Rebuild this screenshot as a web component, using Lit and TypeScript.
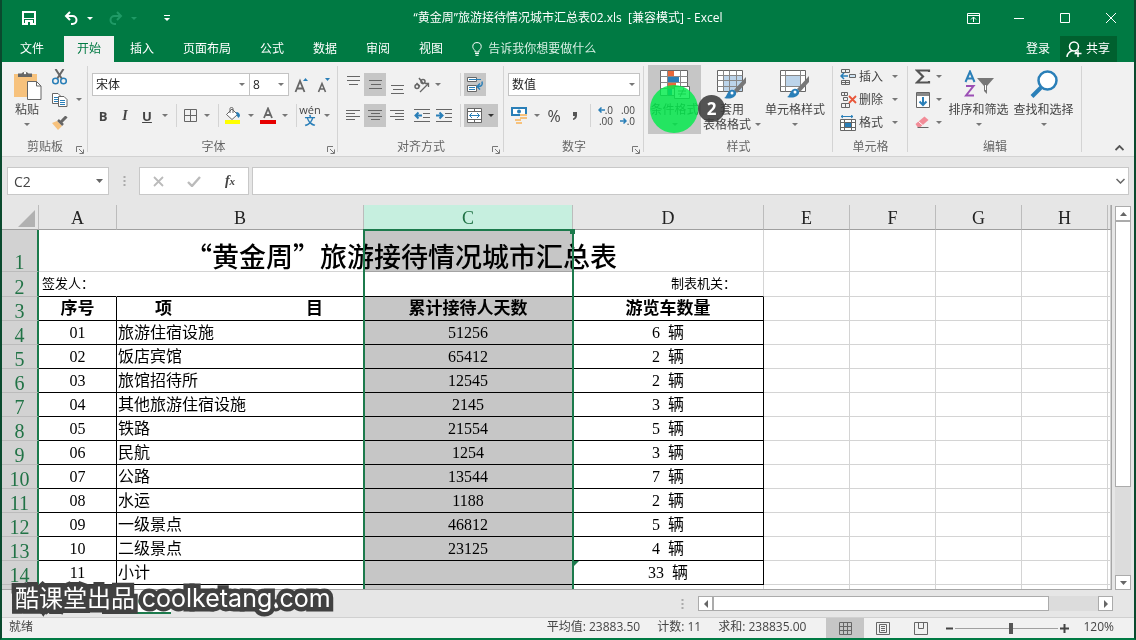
import { LitElement, html, svg, css, nothing } from "lit";
import { customElement, property } from "lit/decorators.js";
import { classMap } from "lit/directives/class-map.js";

const caret = html`<svg class="caret" width="6" height="3" viewBox="0 0 6 3"><path d="M0 0h6L3 3z" fill="currentColor" /></svg>`;

const icon = (w: number, h: number, body: unknown) =>
  html`<svg width=${w} height=${h} viewBox="0 0 ${w} ${h}" fill="none" stroke="#666" aria-hidden="true">${body}</svg>`;

const hLines = (rows: [number, number, number][]) =>
  rows.map(([x, y, w]) => svg`<path d="M${x} ${y + 0.5}h${w}" />`);

const icons = {
  save: icon(14, 14, svg`<path d="M1 1h12v12H1z" stroke="#fff" stroke-width="2"/><path d="M2 7.5h10" stroke="#fff"/><path d="M3 9h8v5H3z" fill="#fff" stroke="none"/><path d="M6 11h2v3H6z" fill="#007a43" stroke="none"/>`),
  undo: icon(15, 14, svg`<path d="M2 5h6.5a4 4 0 0 1 0 8H7M6 1L2 5l4 4" stroke="#fff" stroke-width="2"/>`),
  redo: icon(15, 14, svg`<path d="M13 5H6.500a4 4 0 0 0 0 8H8M9 1l4 4-4 4" stroke="#1f9a66" stroke-width="2"/>`),
  customize: icon(6, 7, svg`<path d="M0 .5h6" stroke="#fff"/><path d="M0 3h6L3 6z" fill="#fff" stroke="none"/>`),
  ribbonOpts: icon(13, 11, svg`<path d="M.5 .5h12v10H.5zM.5 2.500h12M6.500 9V4M4 6.500L6.500 4 9 6.500" stroke="#fff"/>`),
  min: icon(10, 10, svg`<path d="M0 5.500h10" stroke="#fff"/>`),
  max: icon(10, 10, svg`<path d="M.5 .5h9v9h-9z" stroke="#fff"/>`),
  close: icon(10, 10, svg`<path d="M0 0l10 10M10 0L0 10" stroke="#fff"/>`),
  bulb: icon(10, 14, svg`<path d="M3 10V8.500C1.500 7 .800 6 .800 4.600a4.200 4 0 0 1 8.400 0C9.200 6 8.500 7 7 8.500V10zM3 11.500h4M3.500 13.300h3" stroke="#fff"/>`),
  person: icon(16, 16, svg`<circle cx="8" cy="5.500" r="4.500" stroke="#fff" stroke-width="1.500"/><path d="M1 16c0-3 2-5 5-6.500M9.500 10.500L10.500 12M8.500 12.500h7M12 9v7" stroke="#fff" stroke-width="1.500"/>`),
  paste: icon(29, 30, svg`<path d="M1 4h23v23H1z" fill="#f7c27d" stroke="none"/><path d="M5 7V3.500h3.500a4 3.500 0 0 1 7 0H19V7z" fill="#666" stroke="none"/><circle cx="12" cy="3" r="1.200" fill="#fff" stroke="none"/><path d="M14.500 11.500h9l4.500 4.500v13.500H14.500z" fill="#fff"/><path d="M23.500 11.500V16H28"/>`),
  cut: icon(15, 16, svg`<path d="M3.500 0L10 10M11.500 0L5 10" stroke-width="2"/><circle cx="3.500" cy="12" r="2.800" stroke="#2a7fb8" stroke-width="1.500"/><circle cx="11.500" cy="12" r="2.800" stroke="#2a7fb8" stroke-width="1.500"/>`),
  copy: icon(16, 14, svg`<path d="M.5 .5h5.500l2.500 2.500v7.500h-8z" fill="#fff"/><path d="M2 4.500h5M2 6.500h5M2 8.500h5" stroke="#2a7fb8"/><path d="M6.500 3.500h5.500l3 3v7h-8.500z" fill="#fff"/><path d="M8 7.500h5M8 9.500h5M8 11.500h5" stroke="#2a7fb8"/>`),
  brush: icon(16, 14, svg`<path d="M0 7l5-2 5 5-4 4z" fill="#f7c27d" stroke="none"/><path d="M6 4l5 5" stroke-width="2.500"/><path d="M9 6l5.500-5.500" stroke-width="3"/>`),
  growFont: icon(16, 18, svg`<path d="M1.500 16L6 5l4.500 11M3 12.500h6" stroke-width="1.800"/><path d="M9 5h5l-2.500-3z" fill="#2a7fb8" stroke="none"/>`),
  shrinkFont: icon(16, 18, svg`<path d="M2.500 16L6 7.500 9.500 16M4 13h4" stroke-width="1.600"/><path d="M9 2h5l-2.500 3z" fill="#2a7fb8" stroke="none"/>`),
  borders: icon(13, 13, svg`<path d="M.5 .5h12v12H.5zM6.500 .5v12M.5 6.500h12"/>`),
  fill: icon(18, 17, svg`<path d="M2.500 7.500L8 2l5.500 5.500L8 12.500z" fill="#fff"/><path d="M6 6V1.500a1.500 1 0 0 1 3 0V6"/><path d="M12 5c3 0 4 2 4 4l-1.500 2L13 9z" fill="#2a7fb8" stroke="none"/><path d="M1 13h15v4H1z" fill="#ff0" stroke="none"/>`),
  fontColor: icon(16, 17, svg`<path d="M4 11L8 1.500 12 11M5.300 8h5.400" stroke-width="1.800"/><path d="M0 13h16v4H0z" fill="#e60000" stroke="none"/>`),
  orient: icon(17, 16, svg`<g stroke-width="1.500"><circle cx="4" cy="9.500" r="2"/><path d="M3.500 6L7 9.500M6 1l4.500 6"/><circle cx="10" cy="4.500" r="2"/></g><path d="M7 15L15.500 6.500M12 6.500h3.500V10" stroke-width="1.300"/>`),
  top: icon(15, 18, hLines([[1, 0, 13], [1, 4, 13], [3, 8, 9]])),
  middle: icon(15, 18, hLines([[1, 4, 13], [3, 8, 10], [1, 12, 13]])),
  bottom: icon(15, 18, hLines([[1, 9, 13], [3, 13, 10], [1, 17, 13]])),
  left: icon(15, 13, hLines([[0, 1, 14], [0, 4, 9], [0, 7, 14], [0, 10, 9]])),
  center: icon(15, 13, hLines([[0, 1, 14], [3, 4, 9], [0, 7, 14], [3, 10, 9]])),
  right: icon(15, 13, hLines([[0, 1, 14], [5, 4, 9], [0, 7, 14], [5, 10, 9]])),
  outdent: icon(16, 14, svg`${hLines([[0, 0, 16], [9, 4, 7], [9, 8, 7], [0, 12, 16]])}<path d="M8 6.500H2M4.500 3.500l-3 3 3 3" stroke="#2a7fb8" stroke-width="2"/>`),
  indent: icon(16, 14, svg`${hLines([[0, 0, 16], [9, 4, 7], [9, 8, 7], [0, 12, 16]])}<path d="M0 6.500h6M3.500 3.500l3 3-3 3" stroke="#2a7fb8" stroke-width="2"/>`),
  wrap: icon(17, 17, svg`<path d="M.5 1.500h9v4h-9zM.5 9.500h9v6h-9z" fill="#fff"/><path d="M2 3.500h12M2 11.500h6M2 13.500h6" stroke="#2a7fb8"/><path d="M15 5.500c1 4-1 5-4 5M13 7.500l-3 3 3 3" stroke="#2a7fb8" stroke-width="1.500"/>`),
  merge: icon(15, 15, svg`<path d="M.5 .5h14v14H.5z" fill="#fff"/><path d="M.5 3.500h14M.5 11.500h14M7.500 .5v3M7.500 11.500v3"/><path d="M2.500 7.500h10M5 5L2.500 7.500 5 10M10 5l2.500 2.500L10 10" stroke="#2a7fb8"/>`),
  currency: icon(17, 17, svg`<path d="M1 1h14v7H1z" fill="#fff" stroke="#2a7fb8" stroke-width="2"/><circle cx="8" cy="4.500" r="2" fill="#2a7fb8" stroke="none"/><path d="M9 7h7v2H9zM9 10h7v2H9zM4 12h6v2H4zM5 15h6v2H5z" fill="#f7c27d" stroke="none"/>`),
  comma: icon(6, 8, svg`<path d="M1 0h4v3.500C5 6 3.500 7.500 1 8V6.500C2.500 6 2.800 5 2.800 4H1z" fill="#555" stroke="none"/>`),
  larrow: icon(7, 6, svg`<path d="M7 3H1M3.500 .5L1 3l2.500 2.500" stroke="#2a7fb8" stroke-width="1.500"/>`),
  rarrow: icon(7, 6, svg`<path d="M0 3h6M3.500 .5L6 3 3.500 5.500" stroke="#2a7fb8" stroke-width="1.500"/>`),
  cond: icon(30, 30, svg`<path d="M.5 .5h27v25H.5z" fill="#fff"/><path d="M8 1h6v5H8z" fill="#e8683a" stroke="none"/><path d="M8 7h11v5H8z" fill="#2a7fb8" stroke="none"/><path d="M8 13h8v5H8z" fill="#e8683a" stroke="none"/><path d="M8 19h4v6H8z" fill="#2a7fb8" stroke="none"/><path d="M7.500 .5v25M20.500 .5v25M.5 6.500h27M.5 12.500h27M.5 18.500h27" stroke="#888"/><path d="M14.500 16.500h15v12h-15z" fill="#fff"/><path d="M18 21h8M18 24h8M24 18l-4 9"/>`),
  tableFmt: icon(30, 30, svg`<path d="M.5 .5h25v21H.5z" fill="#fff"/><path d="M7 6h18v15H7z" fill="#bcd4ea" stroke="none"/><path d="M6.500 .5v21M12.500 .5v21M19.500 .5v21M.5 5.500h25M.5 10.500h25M.5 16.500h25" stroke="#888"/><path d="M29 7v6l-9 10-3-3z" fill="#777" stroke="none"/><path d="M7 28c3-1 3-7 7-8s7 3 4 6-7 3-11 2z" fill="#2a7fb8" stroke="none"/><circle cx="15" cy="23" r="1.500" fill="#fff" stroke="none"/>`),
  cellFmt: icon(30, 30, svg`<path d="M.5 .5h25v21H.5z" fill="#fff"/><path d="M6 6h14v10H6z" fill="#bcd4ea" stroke="none"/><path d="M5.500 .5v21M20.500 .5v21M.5 5.500h25M.5 16.500h25" stroke="#888"/><path d="M29 6v6l-9 10-3-3z" fill="#777" stroke="none"/><path d="M7 27c3-1 3-7 7-8s7 3 4 6-7 3-11 2z" fill="#2a7fb8" stroke="none"/><circle cx="15" cy="22" r="1.500" fill="#fff" stroke="none"/>`),
  insert: icon(17, 16, svg`<path d="M1.500 .5h8v3h-8zM5.500 .5v3M1.500 11.500h8v4h-8zM5.500 11.500v4M1.500 13.500h8"/><path d="M9.500 5.500h6v3h-6z" fill="#cfe3f3"/><path d="M8 7H1.500M4 4L1 7l3 3" stroke="#2a7fb8" stroke-width="1.500"/>`),
  remove: icon(17, 16, svg`<path d="M1.500 .5h6v3h-6zM4.500 .5v3M1.500 11.500h8v4h-8zM5.500 11.500v4M3.500 5.500h4v3h-4z"/><path d="M9 4l7 7M16 4l-7 7" stroke="#e8573a" stroke-width="1.800"/>`),
  format: icon(17, 16, svg`<path d="M1 1.500h12M3 0L1 1.500 3 3M11 0l2 1.500L11 3" stroke="#2a7fb8"/><path d="M.5 4.500h15v11H.5z" fill="#fff"/><path d="M4.500 4.500v11M11.500 4.500v11M.5 7.500h15M.5 12.500h15"/><path d="M5 8h6v4H5z" fill="#2a7fb8" stroke="none"/>`),
  sum: icon(16, 15, svg`<path d="M14 3V1.500H2L8 7.500l-6 6h12V12" stroke="#555" stroke-width="2.200"/>`),
  fillDown: icon(14, 16, svg`<path d="M.5 .5h13v15H.5z" fill="#fff"/><path d="M1 1h12v3H1z" fill="#888" stroke="none"/><path d="M7 5v7.500M3.500 9.500L7 13l3.500-3.500" stroke="#2a7fb8" stroke-width="2"/>`),
  eraser: icon(15, 13, svg`<path d="M0 8l9-7.500L13 4 5 11H2z" fill="#f28c98" stroke="none"/><path d="M3 5.500l4.500 4" stroke="#fff"/><path d="M2 11.500h11"/>`),
  sort: icon(30, 28, svg`<path d="M1.500 12L6 1.500 10.500 12M3 8.500h6" stroke="#2a7fb8" stroke-width="2"/><path d="M2 16h7.500L2 25.500h8" stroke="#9b4fb5" stroke-width="2"/><path d="M13 8h17l-7 8v8l-3-3v-5z" fill="#777" stroke="none"/><path d="M21.500 15v5" stroke="#fff"/>`),
  find: icon(28, 28, svg`<circle cx="17.500" cy="10.500" r="9" fill="#fff" stroke="#2a7fb8" stroke-width="2.500"/><path d="M11 17.500L2 26.500" stroke="#2a7fb8" stroke-width="4"/>`),
  launcher: icon(8, 8, svg`<path d="M.5 6V.5H6M3 3l4 4M7.500 3.500v4h-4" stroke="#777"/>`),
  chevUp: icon(9, 6, svg`<path d="M.5 5l4-4 4 4" stroke="#555" stroke-width="1.800"/>`),
  chevDown: icon(9, 6, svg`<path d="M.5 1l4 4 4-4" stroke="#666" stroke-width="1.500"/>`),
  cancel: icon(11, 11, svg`<path d="M1 1l9 9M10 1l-9 9" stroke="#bbb" stroke-width="1.800"/>`),
  accept: icon(14, 11, svg`<path d="M1 6l4 4 8-9" stroke="#bbb" stroke-width="2.400"/>`),
  dots: icon(3, 12, svg`<path d="M.500 2h2M.500 6h2M.500 10h2" stroke="#aaa" stroke-width="2"/>`),
  corner: icon(17, 17, svg`<path d="M17 0v17H0z" fill="#b1b1b1" stroke="none"/>`),
  up: icon(7, 4, svg`<path d="M0 4h7L3.500 0z" fill="#666" stroke="none"/>`),
  down: icon(7, 4, svg`<path d="M0 0h7L3.500 4z" fill="#666" stroke="none"/>`),
  prev: icon(4, 8, svg`<path d="M4 0v8L0 4z" fill="#666" stroke="none"/>`),
  next: icon(4, 8, svg`<path d="M0 0v8l4-4z" fill="#666" stroke="none"/>`),
  viewGrid: icon(13, 13, svg`<path d="M.5 .5h12v12H.5zM4.500 .5v12M8.500 .5v12M.5 4.500h12M.5 8.500h12"/>`),
  viewPage: icon(14, 13, svg`<path d="M.5 .5h13v12H.5zM3.500 2.500h7v8h-7zM5 4.500h4M5 6.500h4M5 8.500h4"/>`),
  viewBreak: icon(14, 13, svg`<path d="M.5 .5h13v12H.5zM4.500 .5v6h5v-6"/>`),
  minus: icon(7, 7, svg`<path d="M0 3.500h7" stroke="#444" stroke-width="2"/>`),
  plus: icon(9, 9, svg`<path d="M0 4.500h9M4.500 0v9" stroke="#444" stroke-width="2"/>`),
};

const controls = css`
  :host, * { box-sizing: border-box; }
  button, input, select { font: inherit; color: inherit; border: 0; padding: 0; margin: 0; background: none; border-radius: 0; }
  button { display: flex; align-items: center; justify-content: center; white-space: nowrap; }
  svg { display: block; flex: none; }
  .caret { color: #777; }
`;

@customElement("title-bar")
class TitleBar extends LitElement {
  static styles = [controls, css`
    :host { display: block; background: #007a43; color: #fff; }
    .title { display: grid; grid-template-columns: 1fr auto 1fr; align-items: center; height: 36px; }
    .quick { display: flex; align-items: center; padding-left: 20px; }
    .quick .caret { color: #fff; }
    .quick .off .caret { color: #1f9a66; }
    .save { margin-right: 28px; }
    .pair { gap: 8px; margin-right: 15px; }
    .more { margin-left: 12px; }
    .name { font-weight: 400; font-size: 12px; margin: 0; white-space: pre; }
    .window { display: flex; justify-content: flex-end; }
    .window button { width: 46px; height: 32px; }
    .tabs { display: flex; align-items: stretch; height: 26px; gap: 3px; }
    .tabs button { padding: 0 13px; }
    .tabs .file { padding: 0 17px 0 18px; }
    .tabs .active { background: #f1f1f1; color: #007a43; }
    .tabs .tell { gap: 6px; color: #d5eee2; }
    .tabs .login { margin-left: auto; padding: 0 7px; }
    .tabs .share { background: #00602f; gap: 4px; padding: 0 7px 0 6px; margin-right: 17px; }
  `];
  render() {
    return html`
      <header class="title">
        <div class="quick">
          <button class="save" aria-label="保存">${icons.save}</button>
          <button class="pair" aria-label="撤消">${icons.undo}${caret}</button>
          <button class="pair off" aria-label="恢复">${icons.redo}${caret}</button>
          <button class="more" aria-label="自定义快速访问工具栏">${icons.customize}</button>
        </div>
        <h1 class="name">“黄金周”旅游接待情况城市汇总表02.xls  [兼容模式] - Excel</h1>
        <div class="window">
          <button aria-label="功能区显示选项">${icons.ribbonOpts}</button>
          <button aria-label="最小化">${icons.min}</button>
          <button aria-label="最大化">${icons.max}</button>
          <button aria-label="关闭">${icons.close}</button>
        </div>
      </header>
      <nav class="tabs">
        <button class="file">文件</button>
        <button class="active">开始</button>
        ${["插入", "页面布局", "公式", "数据", "审阅", "视图"].map((t) => html`<button>${t}</button>`)}
        <button class="tell">${icons.bulb}告诉我你想要做什么</button>
        <button class="login">登录</button>
        <button class="share">${icons.person}共享</button>
      </nav>`;
  }
}

@customElement("ribbon-bar")
class RibbonBar extends LitElement {
  static styles = [controls, css`
    :host {
      display: grid; grid-template-columns: 86px 250px 166px 140px 189px 75px 174px 1fr;
      background: #f1f1f1; border-bottom: 1px solid #d2d2d2; color: #444; height: 95px;
    }
    .group { display: grid; grid-template-rows: 69px 22px; align-content: start; padding-top: 3px; position: relative; }
    .group::after { content: ""; position: absolute; right: 0; top: 4px; bottom: 4px; width: 1px; background: #d4d4d4; }
    .body { display: flex; }
    .label { display: flex; align-items: flex-end; justify-content: center; color: #666; position: relative; padding-bottom: 1px; }
    .launch { position: absolute; right: 4px; bottom: 2px; }
    .rows { display: grid; grid-template-rows: 23px 23px; gap: 8px; padding: 8px 4px 0; width: 100%; align-content: start; }
    .row { display: flex; align-items: stretch; }
    .row > button { width: 22px; }
    .row > .s20 { width: 20px; }
    .row > .drop { width: 14px; }
    .row > .on, .row > .on + .drop.on { background: #c6c6c6; }
    .drop.on .caret { color: #333; }
    .sep { width: 8px; display: flex; justify-content: center; }
    .sep::before { content: ""; width: 1px; background: #d4d4d4; }
    .gap { width: 3px; }
    .gap.wide { width: 11px; }
    .gap.thin { width: 1px; }
    .combo { display: grid; background: #fff; border: 1px solid #c3c3c3; align-items: center; }
    .combo select { grid-area: 1 / 1; appearance: none; width: 100%; height: 21px; padding-left: 3px; color: #222; }
    .combo .caret { grid-area: 1 / 1; justify-self: end; margin-right: 4px; pointer-events: none; }
    .font { width: 158px; }
    .size { width: 40px; margin-left: -1px; margin-right: 2px; }
    .number { flex: 1; }
    .bold { font: bold 13px "Open Sans", sans-serif; }
    .italic { font: italic bold 14px "Liberation Serif", serif; }
    .under { font: bold 13px "Open Sans", sans-serif; text-decoration: underline; }
    .pct { font: 500 16px "Open Sans", sans-serif; }
    .row > .phon { width: 20px; flex-direction: column; font-size: 11px; line-height: 10px; }
    .phon b { font-weight: 700; color: #2a7fb8; line-height: 11px; }
    .dec { flex-direction: column; align-items: stretch; font-size: 10px; line-height: 11px; padding-right: 3px; }
    .dec span { display: flex; align-items: center; justify-content: flex-end; }
    .big { flex-direction: column; justify-content: flex-start; line-height: 15px; color: #444; height: 69px; padding-top: 5px; }
    .big svg:first-child { margin-bottom: 2px; }
    .big .caret { margin-top: 6px; }
    .big .line { display: flex; align-items: center; gap: 4px; }
    .big .line .caret { margin: 0; }
    .paste { width: 50px; }
    .small { display: grid; grid-template-rows: 23px 23px 23px; }
    .small button { justify-content: flex-start; }
    .clip button { gap: 8px; }
    .clip { justify-items: start; }
    .styles { padding-left: 4px; }
    .cond { width: 53px; background: #c6c6c6; }
    .fmt { width: 62px; }
    .cellf { width: 64px; }
    .cells { padding-left: 7px; }
    .cells button { gap: 2px; }
    .cells .caret { margin-left: 7px; }
    .edit { padding-left: 7px; width: 38px; }
    .edit button { gap: 5px; }
    .edit button svg:first-child { width: 16px; }
    .edit-big { width: 65px; }
    .edit-big svg:first-child { margin-bottom: 4px; }
    .tail { display: flex; align-items: flex-end; justify-content: flex-end; padding: 0 10px 5px; }
  `];
  private group(label: string, body: unknown, launch = true) {
    return html`<section class="group"><div class="body">${body}</div>
      <div class="label">${label}${launch ? html`<button class="launch" aria-label="${label}设置">${icons.launcher}</button>` : nothing}</div></section>`;
  }
  render() {
    const drop = (on = false) => html`<button class=${classMap({ drop: true, on })} aria-label="更多">${caret}</button>`;
    const tool = (name: string, glyph: unknown, cls = "") => html`<button class=${cls} aria-label=${name}>${glyph}</button>`;
    const sep = html`<span class="sep"></span>`;
    return html`
      ${this.group("剪贴板", html`
        <button class="big paste">${icons.paste}粘贴${caret}</button>
        <div class="small clip">
          <button aria-label="剪切">${icons.cut}</button>
          <button aria-label="复制">${icons.copy}${caret}</button>
          <button aria-label="格式刷">${icons.brush}</button>
        </div>`)}
      ${this.group("字体", html`<div class="rows">
        <div class="row">
          <label class="combo font"><select aria-label="字体"><option>宋体</option></select>${caret}</label>
          <label class="combo size"><select aria-label="字号"><option>8</option></select>${caret}</label>
          ${tool("增大字号", icons.growFont)}${tool("减小字号", icons.shrinkFont)}
        </div>
        <div class="row">
          <button class="bold">B</button><button class="italic">I</button><button class="under">U</button>${drop()}${sep}
          ${tool("边框", icons.borders, "s20")}${drop()}${sep}
          ${tool("填充颜色", icons.fill)}${drop()}
          ${tool("字体颜色", icons.fontColor, "s20")}${drop()}${sep}
          <button class="phon"><span>wén</span><b>文</b></button>${drop()}
        </div></div>`)}
      ${this.group("对齐方式", html`<div class="rows">
        <div class="row">
          ${tool("顶端对齐", icons.top)}${tool("垂直居中", icons.middle, "on")}${tool("底端对齐", icons.bottom)}
          <span class="gap"></span>${tool("方向", icons.orient, "s20")}${drop()}<span class="gap wide"></span>
          ${sep}${tool("自动换行", icons.wrap, "on")}
        </div>
        <div class="row">
          ${tool("左对齐", icons.left)}${tool("居中", icons.center, "on")}${tool("右对齐", icons.right)}
          <span class="gap"></span>${tool("减少缩进量", icons.outdent)}${tool("增加缩进量", icons.indent)}<span class="gap thin"></span>
          ${sep}${tool("合并后居中", icons.merge, "on s20")}${drop(true)}
        </div></div>`)}
      ${this.group("数字", html`<div class="rows">
        <div class="row"><label class="combo number"><select aria-label="数字格式"><option>数值</option></select>${caret}</label></div>
        <div class="row">
          ${tool("会计数字格式", icons.currency)}${drop()}
          <button class="pct s20">%</button>${tool("千位分隔样式", icons.comma)}${sep}
          <button class="dec"><span>${icons.larrow}.0</span><span>.00</span></button>
          <button class="dec"><span>.00</span><span>${icons.rarrow}.0</span></button>
        </div></div>`)}
      ${this.group("样式", html`<div class="body styles">
        <button class="big cond">${icons.cond}条件格式${caret}</button>
        <button class="big fmt">${icons.tableFmt}套用<span class="line">表格格式${caret}</span></button>
        <button class="big cellf">${icons.cellFmt}单元格样式${caret}</button>
      </div>`, false)}
      ${this.group("单元格", html`<div class="small cells">
        <button>${icons.insert}插入${caret}</button>
        <button>${icons.remove}删除${caret}</button>
        <button>${icons.format}格式${caret}</button>
      </div>`, false)}
      ${this.group("编辑", html`
        <div class="small edit">
          <button aria-label="求和">${icons.sum}${caret}</button>
          <button aria-label="填充">${icons.fillDown}${caret}</button>
          <button aria-label="清除">${icons.eraser}${caret}</button>
        </div>
        <button class="big edit-big">${icons.sort}排序和筛选${caret}</button>
        <button class="big edit-big">${icons.find}查找和选择${caret}</button>`, false)}
      <div class="tail"><button aria-label="折叠功能区">${icons.chevUp}</button></div>`;
  }
}

@customElement("formula-bar")
class FormulaBar extends LitElement {
  static styles = [controls, css`
    :host { display: flex; background: #e6e6e6; padding: 10px 5px; height: 48px; align-items: stretch; color: #444; }
    .box { background: #fff; border: 1px solid #c8c8c8; display: flex; align-items: center; }
    .name { width: 102px; padding: 0 5px 0 6px; font-size: 14px; }
    .name input, .formula input { flex: 1; min-width: 0; height: 24px; outline: 0; }
    .dots { display: flex; align-items: center; justify-content: center; width: 30px; }
    .tools { width: 110px; margin-right: 3px; }
    .tools button { flex: 1; height: 26px; }
    .fx { font: italic bold 14px "Liberation Serif", serif; }
    .fx small { font-size: 11px; }
    .formula { flex: 1; padding: 0 3px 0 6px; }
  `];
  render() {
    return html`
      <div class="box name"><input aria-label="名称框" value="C2" /><button aria-label="名称列表">${icons.down}</button></div>
      <span class="dots">${icons.dots}</span>
      <div class="box tools"><button aria-label="取消">${icons.cancel}</button><button aria-label="输入">${icons.accept}</button>
        <button class="fx" aria-label="插入函数">f<small>x</small></button></div>
      <div class="box formula"><input aria-label="编辑栏" /><button aria-label="展开编辑栏">${icons.chevDown}</button></div>`;
  }
}

const records: [string, string, string, string][] = [
  ["01", "旅游住宿设施", "51256", "6"],
  ["02", "饭店宾馆", "65412", "2"],
  ["03", "旅馆招待所", "12545", "2"],
  ["04", "其他旅游住宿设施", "2145", "3"],
  ["05", "铁路", "21554", "5"],
  ["06", "民航", "1254", "3"],
  ["07", "公路", "13544", "7"],
  ["08", "水运", "1188", "2"],
  ["09", "一级景点", "46812", "5"],
  ["10", "二级景点", "23125", "4"],
  ["11", "小计", "", "33"],
];

@customElement("work-sheet")
class WorkSheet extends LitElement {
  static styles = [controls, css`
    :host { display: grid; grid-template-columns: 1fr 22px; min-height: 0; background: #e6e6e6; }
    .view { position: relative; overflow: hidden; min-height: 0; background: #fff; border-right: 1px solid #a6a6a6; border-bottom: 1px solid #a6a6a6; }
    table { border-collapse: separate; border-spacing: 0; table-layout: fixed; width: 100%; font: 16px/20px "Liberation Serif", "Noto Sans CJK SC", serif; color: #000; }
    .c0 { width: 37px; } .ca { width: 78px; } .cb { width: 247px; } .cc { width: 209px; } .cd { width: 191px; } .ce { width: 86px; }
    th, td { padding: 0; border-right: 1px solid #d4d4d4; border-bottom: 1px solid #d4d4d4; text-align: center; white-space: nowrap; height: 24px; }
    td { padding-top: 1px; }
    thead th { height: 25px; background: #e6e6e6; border-color: #bcbcbc; border-bottom-color: #9f9f9f; font-weight: 400; font-size: 18px; padding-top: 2px; color: #222; }
    thead .picked { background: #c6efdf; color: #217346; }
    thead .all { padding: 2px 0 0 16px; }
    tbody th { background: #d2d2d2; color: #217346; font-weight: 400; font-size: 20px; line-height: 18px; vertical-align: bottom; border-bottom-color: #bbb; border-right: 2px solid #1c7a4c; }
    .r1 > * { height: 42px; }
    .r2 > * { height: 25px; }
    .r2 .sub { font-size: 13px; text-align: left; padding-left: 3px; padding-top: 0; border-right-color: transparent; }
    .r2 .dept { border-right-color: #d4d4d4; text-align: center; padding-left: 71px; }
    .r2 .sub, .data { border-bottom-color: #000; }
    .heading { font: 500 27px/30px "Noto Sans CJK SC", sans-serif; vertical-align: bottom; }
    .data { border-right-color: #000; }
    .head .data { font-weight: 700; font-size: 17px; }
    .split { display: flex; justify-content: space-between; padding: 0 40px 0 38px; }
    .item { text-align: left; padding-left: 1px; }
    .unit { margin-left: 4px; }
    .selection { position: absolute; left: 361px; top: 24px; bottom: -4px; width: 211px; border: 2px solid #1c7a4c; display: grid; grid-template-rows: 41px 25px 1fr; pointer-events: none; }
    .shade { background: #c6c6c6; mix-blend-mode: multiply; }
    .handle { position: absolute; right: -3px; top: -2px; width: 5px; height: 5px; background: #1c7a4c; }
    .flag { position: absolute; left: 572px; top: 356px; width: 5px; height: 5px; background: #1c7a4c; clip-path: polygon(0 0, 100% 0, 0 100%); }
    .scroll { display: flex; flex-direction: column; margin: 1px 3px 0; background: #dcdcdc; }
    .scroll button { height: 15px; background: #fff; border: 1px solid #ababab; }
    .thumb { height: 266px; background: #fff; border: 1px solid #ababab; }
    .rest { flex: 1; }
  `];
  render() {
    const blanks = [0, 1, 2, 3, 4].map(() => html`<td></td>`);
    return html`
      <div class="view">
        <table>
          <colgroup><col class="c0" /><col class="ca" /><col class="cb" /><col class="cc" /><col class="cd" />
            <col class="ce" /><col class="ce" /><col class="ce" /><col class="ce" /><col /></colgroup>
          <thead><tr><th class="all">${icons.corner}</th>
            ${["A", "B", "C", "D", "E", "F", "G", "H", ""].map((c) => html`<th class=${classMap({ picked: c === "C" })}>${c}</th>`)}</tr></thead>
          <tbody>
            <tr class="r1"><th>1</th><td class="heading" colspan="4">“黄金周”旅游接待情况城市汇总表</td>${blanks}</tr>
            <tr class="r2"><th>2</th><td class="sub">签发人：</td><td class="sub"></td><td class="sub"></td><td class="sub dept">制表机关：</td>${blanks}</tr>
            <tr class="head"><th>3</th><td class="data">序号</td><td class="data"><span class="split"><span>项</span><span>目</span></span></td>
              <td class="data">累计接待人天数</td><td class="data">游览车数量</td>${blanks}</tr>
            ${records.map(([no, item, days, cars], i) => html`<tr><th>${i + 4}</th><td class="data">${no}</td>
              <td class="data item">${item}</td><td class="data">${days}</td>
              <td class="data">${cars} <span class="unit">辆</span></td>${blanks}</tr>`)}
            <tr><th></th><td></td><td></td><td></td><td></td>${blanks}</tr>
          </tbody>
        </table>
        <div class="selection"><span class="shade"></span><span></span><span class="shade"></span><i class="handle"></i></div>
        <i class="flag"></i>
      </div>
      <div class="scroll"><button aria-label="向上滚动">${icons.up}</button><div class="thumb"></div><span class="rest"></span>
        <button aria-label="向下滚动">${icons.down}</button></div>`;
  }
}

@customElement("bottom-bars")
class BottomBars extends LitElement {
  static styles = [controls, css`
    :host { display: block; color: #444; }
    .sheets { display: flex; align-items: center; height: 27px; background: #e6e6e6; padding: 0 21px 0 100px; }
    .sheet { width: 69px; height: 24px; align-self: flex-start; background: #fff; color: #217346; font-weight: 700; border-bottom: 2px solid #1c7a4c; }
    .dots { margin-left: auto; width: 17px; }
    .scroll { display: flex; width: 415px; height: 15px; background: #dcdcdc; }
    .scroll button { width: 15px; background: #fff; border: 1px solid #ababab; }
    .thumb { width: 336px; background: #fff; border: 1px solid #ababab; margin-right: auto; }
    .status { display: flex; align-items: stretch; height: 21px; background: #f1f1f1; border-top: 1px solid #d0d0d0; line-height: 18px; }
    .ready { margin: 0 auto 0 7px; }
    .stat { margin-right: 17px; white-space: nowrap; }
    .stat.sum { margin-right: 20px; }
    .views { display: flex; margin-right: 6px; }
    .views button { width: 38px; }
    .views .on { background: #c6c6c6; }
    .zoom { display: flex; align-items: center; gap: 2px; }
    .zoom input { appearance: none; width: 103px; height: 16px; background: linear-gradient(#a0a0a0, #a0a0a0) center / 100% 1px no-repeat; }
    .zoom input::-webkit-slider-thumb { appearance: none; width: 4px; height: 11px; background: #555; }
    .pct { margin: 0 20px 0 14px; }
  `];
  render() {
    return html`
      <div class="sheets">
        <button class="sheet">Sheet1</button>
        <span class="dots">${icons.dots}</span>
        <div class="scroll"><button aria-label="向左滚动">${icons.prev}</button><div class="thumb"></div><button aria-label="向右滚动">${icons.next}</button></div>
      </div>
      <footer class="status">
        <span class="ready">就绪</span>
        <span class="stat">平均值: 23883.50</span><span class="stat">计数: 11</span><span class="stat sum">求和: 238835.00</span>
        <div class="views"><button class="on" aria-label="普通">${icons.viewGrid}</button><button aria-label="页面布局">${icons.viewPage}</button><button aria-label="分页预览">${icons.viewBreak}</button></div>
        <div class="zoom"><button aria-label="缩小">${icons.minus}</button><input type="range" aria-label="显示比例" min="0" max="100" value="54" /><button aria-label="放大">${icons.plus}</button></div>
        <span class="pct">120%</span>
      </footer>`;
  }
}

@customElement("app-root")
class AppRoot extends LitElement {
  @property() studio = "酷课堂出品";
  @property() site = "coolketang.com";
  static styles = css`
    :host {
      display: grid; grid-template-rows: auto auto auto 1fr auto; grid-template-columns: minmax(0, 1fr);
      height: 100vh; box-sizing: border-box; position: relative; overflow: hidden;
      border: 2px solid #0a4a2e; border-top: 0; border-bottom: 2px solid #007a43;
      font: 12px/16px "Open Sans", "Noto Sans CJK SC", sans-serif; background: #e6e6e6;
    }
    .tap { position: absolute; left: 648px; top: 85px; width: 48px; height: 48px; border-radius: 50%; background: rgb(0 235 75 / 82%); }
    .step { position: absolute; left: 696px; top: 95px; width: 27px; height: 27px; border-radius: 50%; background: rgb(60 60 60 / 88%); color: #fff; font-weight: 700; font-size: 17px; line-height: 27px; text-align: center; }
    .caption { position: absolute; left: 13px; bottom: 23px; font-family: Inter, "Noto Sans CJK SC", sans-serif; font-size: 24px; line-height: 32px; color: #fff; white-space: nowrap; -webkit-text-stroke: 9px #414141; paint-order: stroke fill; stroke-linejoin: round; }
    .site { font-size: 25px; }
  `;
  render() {
    return html`
      <title-bar></title-bar>
      <ribbon-bar></ribbon-bar>
      <formula-bar></formula-bar>
      <work-sheet></work-sheet>
      <bottom-bars></bottom-bars>
      <span class="tap"></span><span class="step">2</span>
      <div class="caption">${this.studio} <span class="site">${this.site}</span></div>`;
  }
}
